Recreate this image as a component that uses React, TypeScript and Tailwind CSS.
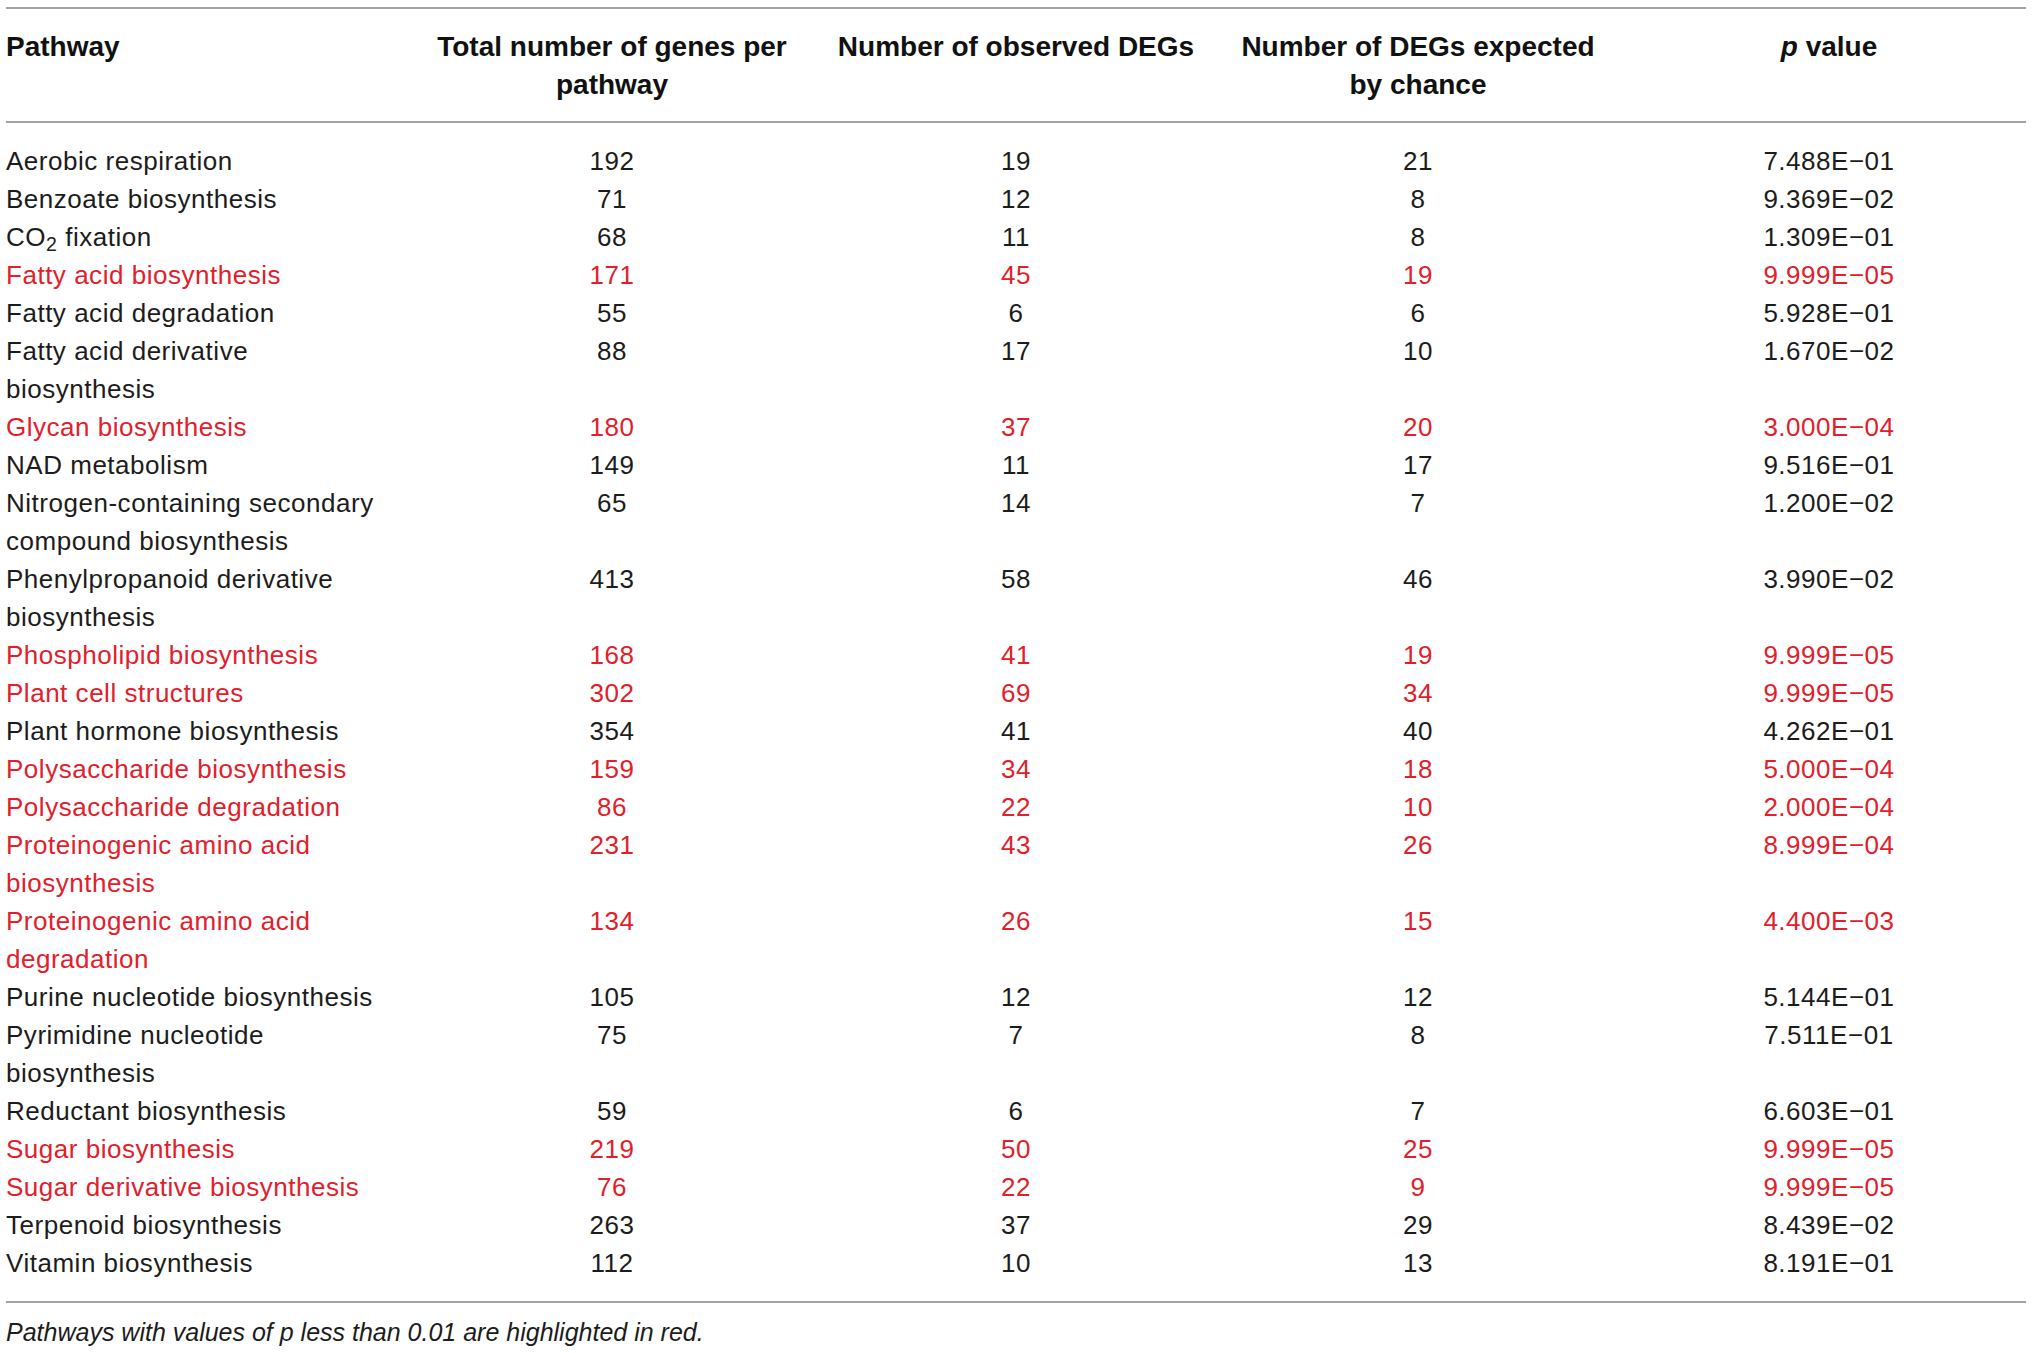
import React from "react";

type Row = {
  name: React.ReactNode;
  total: string;
  observed: string;
  expected: string;
  p: string;
  red?: boolean;
};

const rows: Row[] = [
  { name: "Aerobic respiration", total: "192", observed: "19", expected: "21", p: "7.488E−01" },
  { name: "Benzoate biosynthesis", total: "71", observed: "12", expected: "8", p: "9.369E−02" },
  {
    name: (
      <>
        CO<sub>2</sub> fixation
      </>
    ),
    total: "68",
    observed: "11",
    expected: "8",
    p: "1.309E−01",
  },
  { name: "Fatty acid biosynthesis", total: "171", observed: "45", expected: "19", p: "9.999E−05", red: true },
  { name: "Fatty acid degradation", total: "55", observed: "6", expected: "6", p: "5.928E−01" },
  { name: "Fatty acid derivative\nbiosynthesis", total: "88", observed: "17", expected: "10", p: "1.670E−02" },
  { name: "Glycan biosynthesis", total: "180", observed: "37", expected: "20", p: "3.000E−04", red: true },
  { name: "NAD metabolism", total: "149", observed: "11", expected: "17", p: "9.516E−01" },
  {
    name: "Nitrogen-containing secondary\ncompound biosynthesis",
    total: "65",
    observed: "14",
    expected: "7",
    p: "1.200E−02",
  },
  { name: "Phenylpropanoid derivative\nbiosynthesis", total: "413", observed: "58", expected: "46", p: "3.990E−02" },
  { name: "Phospholipid biosynthesis", total: "168", observed: "41", expected: "19", p: "9.999E−05", red: true },
  { name: "Plant cell structures", total: "302", observed: "69", expected: "34", p: "9.999E−05", red: true },
  { name: "Plant hormone biosynthesis", total: "354", observed: "41", expected: "40", p: "4.262E−01" },
  { name: "Polysaccharide biosynthesis", total: "159", observed: "34", expected: "18", p: "5.000E−04", red: true },
  { name: "Polysaccharide degradation", total: "86", observed: "22", expected: "10", p: "2.000E−04", red: true },
  {
    name: "Proteinogenic amino acid\nbiosynthesis",
    total: "231",
    observed: "43",
    expected: "26",
    p: "8.999E−04",
    red: true,
  },
  {
    name: "Proteinogenic amino acid\ndegradation",
    total: "134",
    observed: "26",
    expected: "15",
    p: "4.400E−03",
    red: true,
  },
  { name: "Purine nucleotide biosynthesis", total: "105", observed: "12", expected: "12", p: "5.144E−01" },
  { name: "Pyrimidine nucleotide\nbiosynthesis", total: "75", observed: "7", expected: "8", p: "7.511E−01" },
  { name: "Reductant biosynthesis", total: "59", observed: "6", expected: "7", p: "6.603E−01" },
  { name: "Sugar biosynthesis", total: "219", observed: "50", expected: "25", p: "9.999E−05", red: true },
  { name: "Sugar derivative biosynthesis", total: "76", observed: "22", expected: "9", p: "9.999E−05", red: true },
  { name: "Terpenoid biosynthesis", total: "263", observed: "37", expected: "29", p: "8.439E−02" },
  { name: "Vitamin biosynthesis", total: "112", observed: "10", expected: "13", p: "8.191E−01" },
];

const grid = "grid grid-cols-[404px_404px_404px_400px_1fr]";

export default function App() {
  return (
    <div className="min-h-screen bg-white px-[6px] pt-[7px] font-['Liberation_Sans',Arial,sans-serif]">
      <div className="border-t-2 border-[#a3a3a3]">
        <div className={`${grid} pt-[19px] pb-[17px] text-[28px] font-bold leading-[38px] text-[#111]`}>
          <div>Pathway</div>
          <div className="text-center">
            Total number of genes per
            <br />
            pathway
          </div>
          <div className="text-center">Number of observed DEGs</div>
          <div className="text-center">
            Number of DEGs expected
            <br />
            by chance
          </div>
          <div className="pl-[14px] text-center">
            <i>p</i> value
          </div>
        </div>

        <div className="border-t-2 border-[#a3a3a3] pt-[19px] pb-[19px]">
          {rows.map((r, i) => (
            <div
              key={i}
              className={`${grid} text-[26px] leading-[38px] tracking-[0.02em] ${
                r.red ? "text-[#e2202b]" : "text-[#1c1c1c]"
              }`}
            >
              <div className="whitespace-pre-line">{r.name}</div>
              <div className="text-center">{r.total}</div>
              <div className="text-center">{r.observed}</div>
              <div className="text-center">{r.expected}</div>
              <div className="pl-[14px] text-center">{r.p}</div>
            </div>
          ))}
        </div>

        <div className="border-t-2 border-[#a3a3a3] pt-[13px]">
          <p className="text-[25px] italic leading-[32px] text-[#1c1c1c]">
            Pathways with values of p less than 0.01 are highlighted in red.
          </p>
        </div>
      </div>
    </div>
  );
}
